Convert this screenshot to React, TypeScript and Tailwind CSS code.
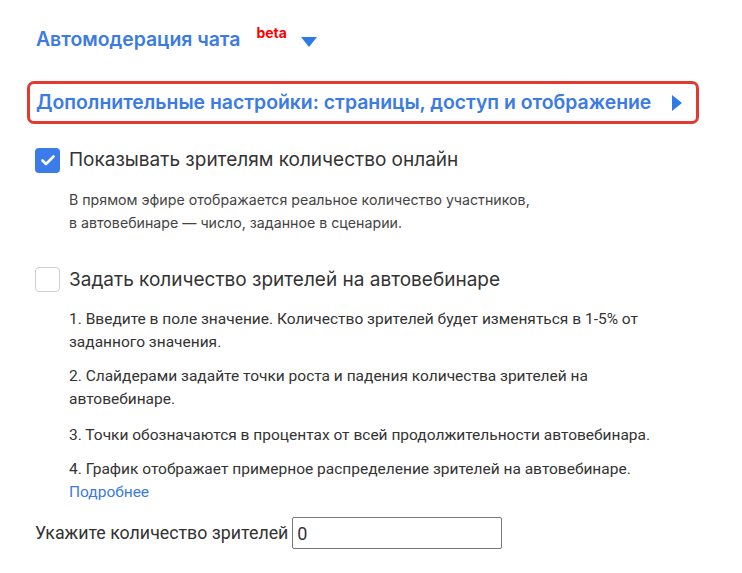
const App = () => {
  return (
    <div className="min-h-screen w-full bg-white font-['Inter',sans-serif] text-[#333]">
      <div className="flex flex-col px-[27px] pt-[22px]">
        <div className="flex items-center pl-[9px]">
          <span className="text-[19.4px] font-semibold text-[#3b7be3]">Автомодерация чата</span>
          <span className="mb-[14px] ml-[16px] text-[14px] font-bold text-[#ff0000]">beta</span>
          <svg className="ml-[14px] mt-[4px]" width="16" height="10" viewBox="0 0 16 10">
            <path d="M0 0 H16 L8 10 Z" fill="#2f7be6" />
          </svg>
        </div>

        <div className="mt-[24px] flex w-[672px] items-center rounded-[7px] border-[3px] border-[#e33a2f] py-[4px] pl-[6px]">
          <span className="text-[19.4px] font-semibold text-[#3b7be3]">
            Дополнительные настройки: страницы, доступ и отображение
          </span>
          <svg className="ml-[21px]" width="10" height="16" viewBox="0 0 10 16">
            <path d="M0 0 V16 L10 8 Z" fill="#2f7be6" />
          </svg>
        </div>

        <div className="mt-[22px] flex items-center gap-[9px] pl-[8px]">
          <div className="flex h-[25px] w-[25px] items-center justify-center rounded-[4px] bg-[#3b7ce9]">
            <svg width="14" height="11" viewBox="0 0 14 11">
              <path d="M1.5 5.5 L5 9 L12.5 1.5" stroke="#fff" strokeWidth="2.6" fill="none" strokeLinecap="round" strokeLinejoin="round" />
            </svg>
          </div>
          <span className="text-[19px] text-[#333]">Показывать зрителям количество онлайн</span>
        </div>

        <p className="mt-[13px] pl-[42px] text-[14.2px] leading-[23px] text-[#444]">
          В прямом эфире отображается реальное количество участников,
          <br />в автовебинаре — число, заданное в сценарии.
        </p>

        <div className="mt-[32px] flex items-center gap-[9px] pl-[8px]">
          <div className="h-[25px] w-[25px] rounded-[4px] border border-[#cfcfcf] bg-white" />
          <span className="text-[19px] text-[#333]">Задать количество зрителей на автовебинаре</span>
        </div>

        <div className="mt-[14px] flex flex-col gap-[11px] pl-[42px] font-['Roboto',sans-serif] text-[15.5px] leading-[23px] text-[#333]">
          <p className="w-[600px]">
            1. Введите в поле значение. Количество зрителей будет изменяться в 1-5% от заданного значения.
          </p>
          <p className="w-[560px]">
            2. Слайдерами задайте точки роста и падения количества зрителей на автовебинаре.
          </p>
          <p className="mt-[2px]">3. Точки обозначаются в процентах от всей продолжительности автовебинара.</p>
          <p>
            4. График отображает примерное распределение зрителей на автовебинаре.
            <br />
            <a className="text-[#3b7be3]">Подробнее</a>
          </p>
        </div>

        <div className="mt-[13px] flex items-center gap-[4px] pl-[8px]">
          <span className="font-['Roboto',sans-serif] text-[17.8px] text-[#333]">Укажите количество зрителей</span>
          <input
            className="h-[32px] w-[210px] rounded-[2px] border border-[#777] px-[4px] font-['Roboto',sans-serif] text-[18px] text-[#333] outline-none"
            defaultValue="0"
          />
        </div>
      </div>
    </div>
  );
};

export default App;
